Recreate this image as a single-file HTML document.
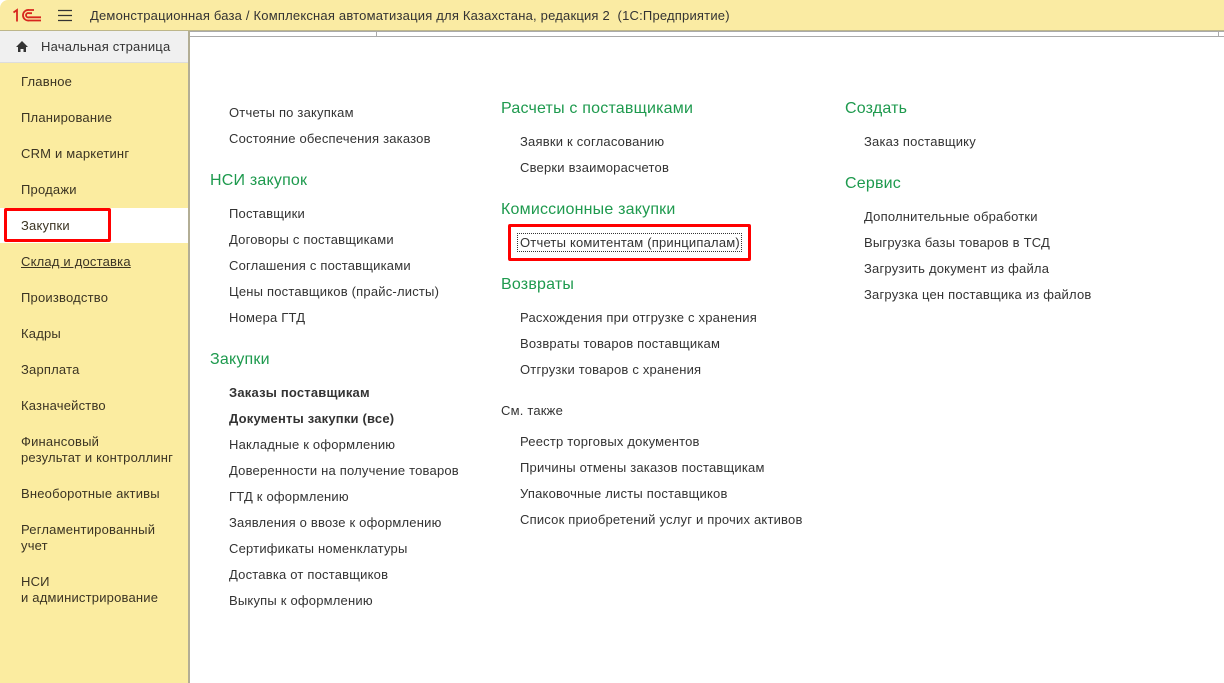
<!DOCTYPE html>
<html><head><meta charset="utf-8"><style>
body{margin:0;width:1224px;height:683px;overflow:hidden;background:#fff;font-family:"Liberation Sans",Arial,sans-serif;position:relative}
.a{position:absolute;white-space:nowrap;font-size:13px;line-height:16px;color:#333;letter-spacing:0.2px}
.s{position:absolute;white-space:nowrap;font-size:13px;line-height:16px;color:#3b3423;letter-spacing:0.2px}
.g{position:absolute;white-space:nowrap;font-size:16px;line-height:20px;color:#1e9a4e;letter-spacing:0.2px}
.b{font-weight:bold}
</style></head><body>
<div style="position:absolute;left:0;top:0;width:1224px;height:30px;background:#faeba3;border-bottom:1px solid #bdb68a;border-top-left-radius:8px"></div>
<svg style="position:absolute;left:12px;top:8px" width="32" height="14" viewBox="0 0 32 14"><g fill="none" stroke="#d7261e" stroke-width="1.8"><path d="M1.5 4.5 L5 2 V13.5"/><path d="M29 12.5 H17 A5.3 5.3 0 1 1 17 2 H22"/><path d="M29 9.3 H17 A2.2 2.2 0 1 1 17 5.2 H20"/></g></svg>
<svg style="position:absolute;left:57px;top:9px" width="16" height="13"><path d="M1 1.5H15M1 6.5H15M1 11.5H15" stroke="#333" stroke-width="1.3"/></svg>
<div class="a" style="left:90px;top:8px;color:#333;letter-spacing:0.2px">Демонстрационная база / Комплексная автоматизация для Казахстана, редакция 2&nbsp; (1С:Предприятие)</div>
<div style="position:absolute;left:190px;top:31px;width:1034px;height:4px;background:#fff;border-top:1px solid #aaa;border-bottom:1px solid #aaa"></div>
<div style="position:absolute;left:376px;top:31px;width:1px;height:5px;background:#aaa"></div>
<div style="position:absolute;left:1218px;top:31px;width:1px;height:5px;background:#aaa"></div>
<div style="position:absolute;left:0;top:31px;width:188px;height:652px;background:#fbeca0;border-right:2px solid #b3ae95"></div>
<div style="position:absolute;left:0;top:31px;width:188px;height:31px;background:#f0f0f0;border-bottom:1px solid #ddd"></div>
<svg style="position:absolute;left:15px;top:40px" width="14" height="13"><path d="M7 1 L13 7 H11 V12 H8.5 V9 H5.5 V12 H3 V7 H1 Z" fill="#333"/></svg>
<div class="a" style="left:41px;top:39px;color:#333">Начальная страница</div>
<div style="position:absolute;left:0;top:208px;width:188px;height:35px;background:#fff"></div>
<div style="position:absolute;left:4px;top:208px;width:101px;height:28px;border:3px solid #f00;border-radius:2px"></div>
<div class="s" style="left:21px;top:74px">Главное</div>
<div class="s" style="left:21px;top:110px">Планирование</div>
<div class="s" style="left:21px;top:146px">CRM и маркетинг</div>
<div class="s" style="left:21px;top:182px">Продажи</div>
<div class="s" style="left:21px;top:218px">Закупки</div>
<div class="s" style="left:21px;top:254px;text-decoration:underline">Склад и доставка</div>
<div class="s" style="left:21px;top:290px">Производство</div>
<div class="s" style="left:21px;top:326px">Кадры</div>
<div class="s" style="left:21px;top:362px">Зарплата</div>
<div class="s" style="left:21px;top:398px">Казначейство</div>
<div class="s" style="left:21px;top:434px">Финансовый<br>результат и контроллинг</div>
<div class="s" style="left:21px;top:486px">Внеоборотные активы</div>
<div class="s" style="left:21px;top:522px">Регламентированный<br>учет</div>
<div class="s" style="left:21px;top:574px">НСИ<br>и администрирование</div>

<div class="a" style="left:229px;top:105px">Отчеты по закупкам</div>
<div class="a" style="left:229px;top:131px">Состояние обеспечения заказов</div>
<div class="g" style="left:210px;top:171px">НСИ закупок</div>
<div class="a" style="left:229px;top:206px">Поставщики</div>
<div class="a" style="left:229px;top:232px">Договоры с поставщиками</div>
<div class="a" style="left:229px;top:258px">Соглашения с поставщиками</div>
<div class="a" style="left:229px;top:284px">Цены поставщиков (прайс-листы)</div>
<div class="a" style="left:229px;top:310px">Номера ГТД</div>
<div class="g" style="left:210px;top:350px">Закупки</div>
<div class="a b" style="left:229px;top:385px">Заказы поставщикам</div>
<div class="a b" style="left:229px;top:411px">Документы закупки (все)</div>
<div class="a" style="left:229px;top:437px">Накладные к оформлению</div>
<div class="a" style="left:229px;top:463px">Доверенности на получение товаров</div>
<div class="a" style="left:229px;top:489px">ГТД к оформлению</div>
<div class="a" style="left:229px;top:515px">Заявления о ввозе к оформлению</div>
<div class="a" style="left:229px;top:541px">Сертификаты номенклатуры</div>
<div class="a" style="left:229px;top:567px">Доставка от поставщиков</div>
<div class="a" style="left:229px;top:593px">Выкупы к оформлению</div>

<div class="g" style="left:501px;top:99px">Расчеты с поставщиками</div>
<div class="a" style="left:520px;top:134px">Заявки к согласованию</div>
<div class="a" style="left:520px;top:160px">Сверки взаиморасчетов</div>
<div class="g" style="left:501px;top:200px">Комиссионные закупки</div>
<div style="position:absolute;left:508px;top:224px;width:237px;height:31px;border:3px solid #f00;border-radius:2px"></div>
<div style="position:absolute;left:517px;top:233px;width:223px;height:17px;border:1px dotted #333"></div>
<div class="a" style="left:520px;top:235px">Отчеты комитентам (принципалам)</div>
<div class="g" style="left:501px;top:275px">Возвраты</div>
<div class="a" style="left:520px;top:310px">Расхождения при отгрузке с хранения</div>
<div class="a" style="left:520px;top:336px">Возвраты товаров поставщикам</div>
<div class="a" style="left:520px;top:362px">Отгрузки товаров с хранения</div>
<div class="a" style="left:501px;top:403px">См. также</div>
<div class="a" style="left:520px;top:434px">Реестр торговых документов</div>
<div class="a" style="left:520px;top:460px">Причины отмены заказов поставщикам</div>
<div class="a" style="left:520px;top:486px">Упаковочные листы поставщиков</div>
<div class="a" style="left:520px;top:512px">Список приобретений услуг и прочих активов</div>

<div class="g" style="left:845px;top:99px">Создать</div>
<div class="a" style="left:864px;top:134px">Заказ поставщику</div>
<div class="g" style="left:845px;top:174px">Сервис</div>
<div class="a" style="left:864px;top:209px">Дополнительные обработки</div>
<div class="a" style="left:864px;top:235px">Выгрузка базы товаров в ТСД</div>
<div class="a" style="left:864px;top:261px">Загрузить документ из файла</div>
<div class="a" style="left:864px;top:287px">Загрузка цен поставщика из файлов</div>
</body></html>
